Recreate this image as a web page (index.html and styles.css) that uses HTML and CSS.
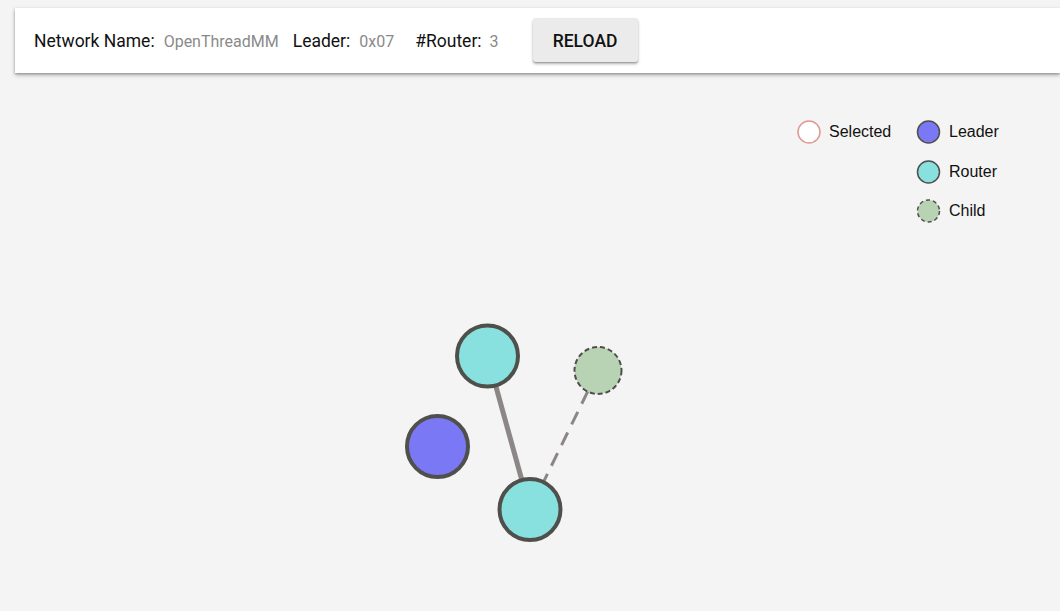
FILE: index.html
```html
<!DOCTYPE html>
<html>
<head>
<meta charset="utf-8">
<link rel="stylesheet" href="styles.css">
</head>
<body>
<header class="bar">
  <div class="field"><span class="label">Network Name:</span><span class="value">OpenThreadMM</span></div>
  <div class="field"><span class="label">Leader:</span><span class="value">0x07</span></div>
  <div class="field"><span class="label">#Router:</span><span class="value">3</span></div>
  <button class="reload">RELOAD</button>
</header>
<main class="canvas">
  <svg class="topo" width="1060" height="538" viewBox="0 73 1060 538">
    <line x1="487.5" y1="356" x2="530" y2="509.5" class="link-solid"/>
    <line x1="598" y1="370.5" x2="530" y2="509.5" class="link-dash"/>
    <circle cx="487.5" cy="356" r="30.5" class="node router"/>
    <circle cx="437.5" cy="446.5" r="30.5" class="node leader"/>
    <circle cx="530" cy="509.5" r="30.5" class="node router"/>
    <circle cx="598" cy="370.5" r="23.5" class="node child"/>

    <circle cx="809" cy="132" r="11" class="lg-selected"/>
    <text x="829" y="137" class="lg-text">Selected</text>
    <circle cx="928.5" cy="132" r="11" class="lg leader"/>
    <text x="949" y="137" class="lg-text">Leader</text>
    <circle cx="928.5" cy="172" r="11" class="lg router"/>
    <text x="949" y="177" class="lg-text">Router</text>
    <circle cx="928.5" cy="211" r="11" class="lg child"/>
    <text x="949" y="216" class="lg-text">Child</text>
  </svg>
</main>
</body>
</html>
```
FILE: styles.css
```css
html, body {
  margin: 0;
  padding: 0;
  background: #f4f4f4;
  overflow: hidden;
}
body {
  width: 1060px;
  height: 611px;
  font-family: Roboto, "Liberation Sans", sans-serif;
}
.bar {
  margin: 8px 0 0 15px;
  height: 65px;
  background: #fff;
  box-shadow: 0 2px 4px rgba(0,0,0,0.3), 0 1px 2px rgba(0,0,0,0.2);
  display: flex;
  align-items: center;
  padding-left: 19px;
  box-sizing: border-box;
}
.field {
  display: flex;
  align-items: baseline;
  margin-right: 14px;
}
.label {
  font-size: 17.5px;
  color: #111;
  margin-right: 9px;
}
.value {
  font-size: 16px;
  color: #8a8a8a;
}
.field:nth-child(2) { margin-right: 21px; }
.field:nth-child(3) { margin-right: 34px; }
.field:nth-child(3) .label { margin-right: 8px; }
.reload {
  margin-top: -1px;
  width: 105px;
  height: 44px;
  border: none;
  border-radius: 3px;
  background: #ebebeb;
  box-shadow: 0 2px 3px rgba(0,0,0,0.3), 0 1px 1px rgba(0,0,0,0.15);
  font-family: Roboto, "Liberation Sans", sans-serif;
  font-weight: 500;
  font-size: 17.5px;
  color: #111;
  letter-spacing: 0;
  padding: 2px 0 0 0;
}
.canvas {
  display: block;
}
.topo {
  display: block;
}
.link-solid {
  stroke: #8c8686;
  stroke-width: 5;
}
.link-dash {
  stroke: #8c8686;
  stroke-width: 3;
  stroke-dasharray: 14 9;
}
.node {
  stroke: #4f4f4b;
  stroke-width: 4;
}
.router { fill: #88e1de; }
.leader { fill: #7b78f5; }
.child {
  fill: #b8d3b4;
  stroke-width: 2;
  stroke-dasharray: 5 3;
}
.lg {
  stroke: #4f4f4b;
  stroke-width: 1.5;
}
.lg.child {
  stroke-width: 1.5;
  stroke-dasharray: 4 3;
}
.lg-selected {
  fill: #fff;
  stroke: #e09a94;
  stroke-width: 1.5;
}
.lg-text {
  font-family: "Liberation Sans", Arial, sans-serif;
  font-size: 16px;
  fill: #111;
}
```
